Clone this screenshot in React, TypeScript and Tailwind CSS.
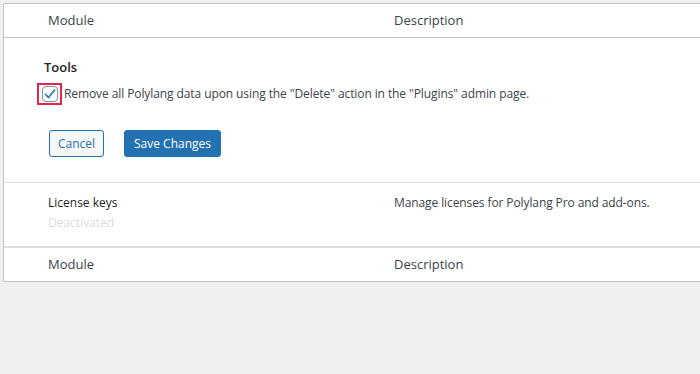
import React from "react";

export default function App() {
  return (
    <div className="min-h-[374px] w-[700px] overflow-hidden bg-[#f0f0f1] pt-[3px] pl-[3px] font-['Open_Sans','Noto_Sans',sans-serif] text-[12px] text-[#3c434a]">
      <div className="w-[720px] border border-r-0 border-[#c3c4c7] bg-white">
        {/* header */}
        <div className="flex h-[34px] items-center border-b border-[#c3c4c7] pt-[1px] text-[13px]">
          <div className="w-[390px] pl-[44px]">Module</div>
          <div>Description</div>
        </div>
        {/* tools section */}
        <div className="border-b border-[#dcdcde] pl-[40px] pt-[19px] pb-[25px]">
          <div className="h-[20px] text-[13px] font-semibold leading-[20px] text-[#1d2327]">Tools</div>
          <div className="mt-[6px] flex h-[22px] items-center">
            <div className="-ml-[7px] flex h-[22px] w-[25px] items-center justify-center border-2 border-[#e2264d]">
              <div className="flex h-[16px] w-[16px] items-center justify-center rounded-[4px] border border-[#8c8f94] bg-white">
                <svg width="14" height="14" viewBox="0 0 20 20">
                  <path d="M3.5 10.5 L8 15 L16.5 4.5" fill="none" stroke="#3582c4" strokeWidth="2.6" strokeLinecap="round" strokeLinejoin="round" />
                </svg>
              </div>
            </div>
            <span className="ml-[2px] text-[12px] leading-[20px] tracking-[-0.09px]">
              Remove all Polylang data upon using the "Delete" action in the "Plugins" admin page.
            </span>
          </div>
          <div className="mt-[25px] flex items-center gap-[20px] pl-[5px]">
            <button className="h-[27px] w-[55px] rounded-[3px] border border-[#2271b1] bg-[#f6f7f7] text-[12px] text-[#2271b1]">
              Cancel
            </button>
            <button className="h-[27px] w-[97px] rounded-[3px] border border-[#2271b1] bg-[#2271b1] text-[12px] font-medium text-white">
              Save Changes
            </button>
          </div>
        </div>
        {/* license keys */}
        <div className="flex h-[63px] pt-[11px]">
          <div className="w-[390px] pl-[44px]">
            <div className="leading-[18px] text-[#1d2327]">License keys</div>
            <div className="mt-[2px] leading-[18px] text-[#dcdcde]">Deactivated</div>
          </div>
          <div className="leading-[18px] tracking-[-0.1px]">Manage licenses for Polylang Pro and add-ons.</div>
        </div>
        {/* footer */}
        <div className="flex h-[35px] items-center border-t-2 border-[#dcdcde] text-[13px]">
          <div className="w-[390px] pl-[44px]">Module</div>
          <div>Description</div>
        </div>
      </div>
    </div>
  );
}
